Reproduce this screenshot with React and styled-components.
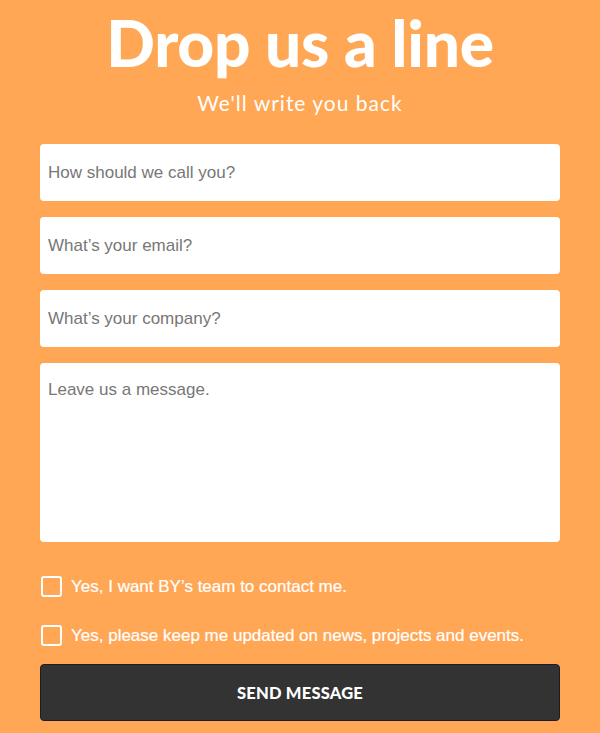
import styled, { createGlobalStyle } from 'styled-components';

const GlobalStyle = createGlobalStyle`
  html, body {
    margin: 0;
    padding: 0;
    background: #ffa755;
  }
  * { box-sizing: border-box; }
`;

const Page = styled.main`
  width: 600px;
  height: 733px;
  overflow: hidden;
  background: #ffa755;
  padding: 0 40px;
  font-family: "Liberation Sans", Arial, sans-serif;
`;

const Title = styled.h1`
  margin: 0;
  padding-top: 7px;
  text-align: center;
  color: #fff;
  font-family: Lato, "Noto Sans", sans-serif;
  font-weight: 900;
  font-size: 64px;
  line-height: 72px;
  letter-spacing: -0.3px;
`;

const Subtitle = styled.p`
  margin: 12px 0 0;
  text-align: center;
  color: #fff;
  font-family: Lato, "Noto Sans", sans-serif;
  font-size: 21px;
  line-height: 24px;
  letter-spacing: 1px;
`;

const Form = styled.form`
  display: flex;
  flex-direction: column;
  gap: 16px;
  margin-top: 29px;
`;

const Input = styled.input`
  display: block;
  width: 100%;
  height: 57px;
  border: none;
  border-radius: 4px;
  background: #fff;
  padding: 0 8px;
  font-family: "Liberation Sans", Arial, sans-serif;
  font-size: 17px;
  color: #333;
  outline: none;
  &::placeholder { color: #777; }
`;

const TextArea = styled.textarea`
  display: block;
  width: 100%;
  height: 179px;
  border: none;
  border-radius: 4px;
  background: #fff;
  padding: 17px 8px;
  resize: none;
  font-family: "Liberation Sans", Arial, sans-serif;
  font-size: 17px;
  line-height: 20px;
  outline: none;
  &::placeholder { color: #777; }
`;

const Checks = styled.div`
  display: flex;
  flex-direction: column;
  gap: 28px;
  margin-top: 34px;
`;

const CheckRow = styled.label`
  display: flex;
  align-items: center;
  gap: 9px;
  color: #fff;
  font-size: 17px;
  line-height: 21px;
  -webkit-text-stroke: 0.2px #fff;
`;

const Box = styled.span`
  width: 21px;
  height: 21px;
  margin-left: 1px;
  border: 2px solid #fff;
  border-radius: 3px;
  flex-shrink: 0;
`;

const Button = styled.button`
  display: block;
  width: 100%;
  height: 57px;
  margin-top: 18px;
  border: 1px solid #1c1c2a;
  border-radius: 4px;
  background: #333;
  color: #fff;
  font-family: Lato, "Noto Sans", sans-serif;
  font-weight: 900;
  font-size: 16.5px;
  letter-spacing: 0.2px;
  cursor: pointer;
`;

export default function App () {
  return (
    <Page>
      <GlobalStyle />
      <Title>Drop us a line</Title>
      <Subtitle>We'll write you back</Subtitle>
      <Form>
        <Input type="text" placeholder="How should we call you?" />
        <Input type="email" placeholder="What’s your email?" />
        <Input type="text" placeholder="What’s your company?" />
        <TextArea placeholder="Leave us a message." />
      </Form>
      <Checks>
        <CheckRow><Box />Yes, I want BY’s team to contact me.</CheckRow>
        <CheckRow><Box />Yes, please keep me updated on news, projects and events.</CheckRow>
      </Checks>
      <Button type="button">SEND MESSAGE</Button>
    </Page>
  );
}
